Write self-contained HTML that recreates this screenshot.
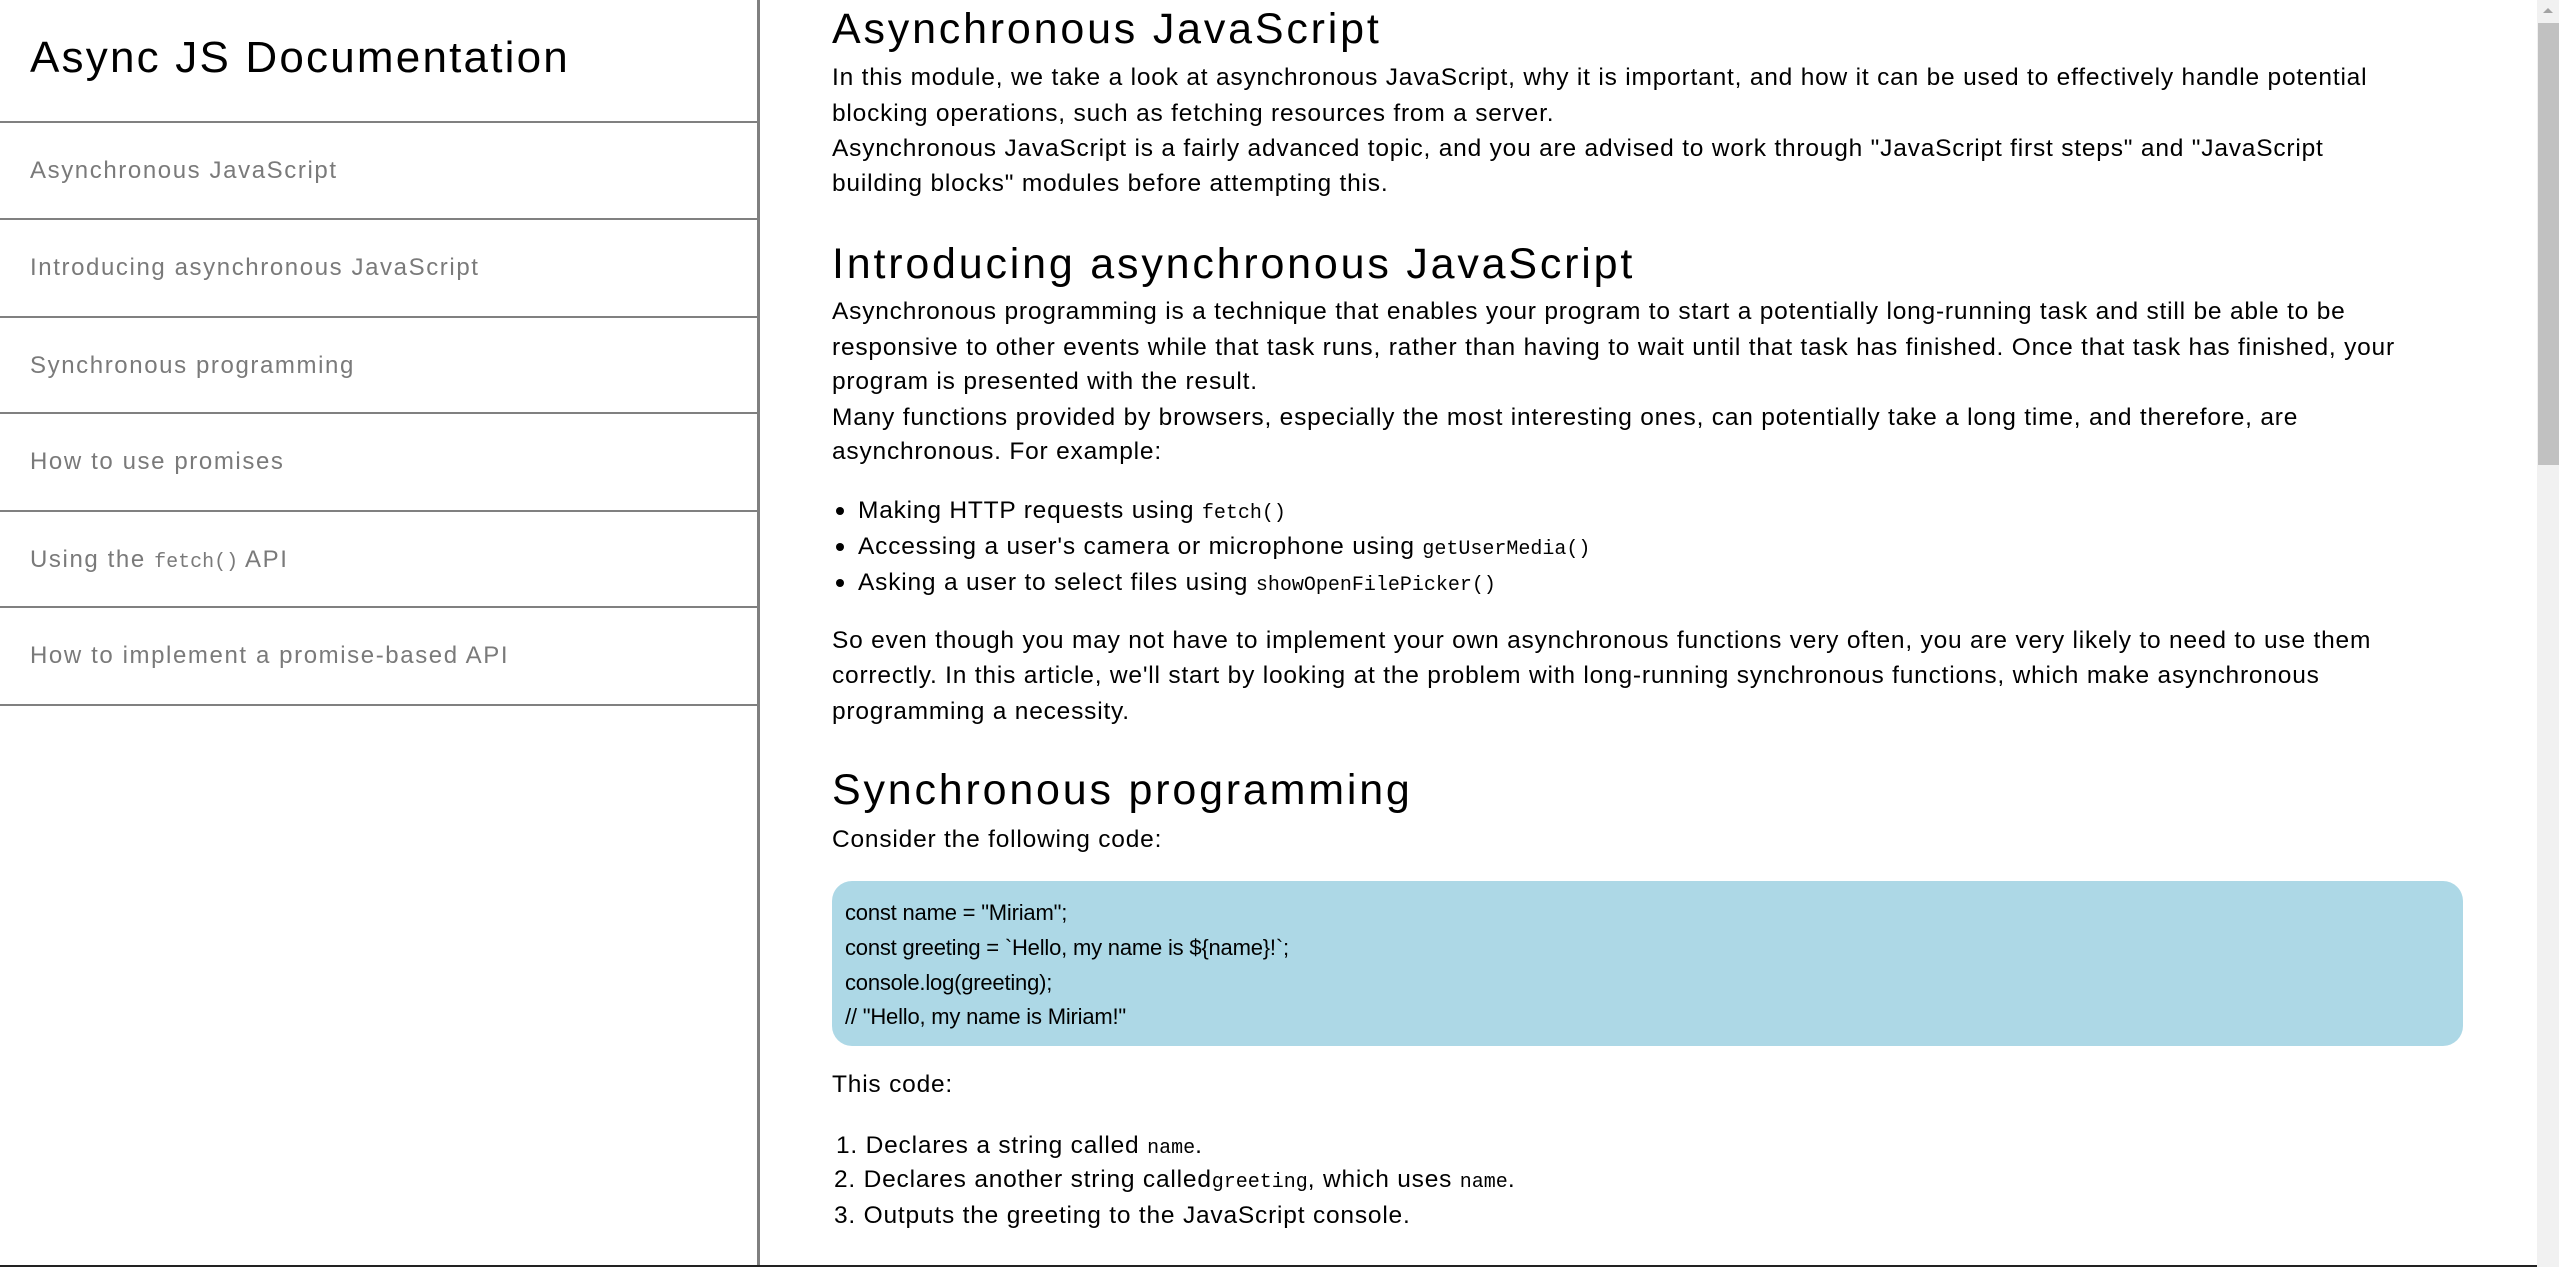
<!DOCTYPE html>
<html><head><meta charset="utf-8"><style>
*{margin:0;padding:0;box-sizing:border-box}
html,body{width:2559px;height:1267px;overflow:hidden;background:#fff;font-family:"Liberation Sans",Arial,sans-serif;color:#000}
.a{position:absolute;white-space:nowrap}
.side{position:absolute;left:0;top:0;width:760px;height:1267px;border-right:3px solid #808080}
.hr{position:absolute;left:0;width:757px;height:2px;background:#808080}
.nav{position:absolute;left:30px;font-size:24px;line-height:36px;color:#7a7a7a;letter-spacing:1.6px}
.p{position:absolute;left:832px;font-size:24.5px;line-height:36px;letter-spacing:0.8px;white-space:nowrap}
.h{position:absolute;left:832px;font-size:43px;line-height:56px;letter-spacing:2.8px;white-space:nowrap}
code{font-family:"Liberation Mono",monospace;font-size:20px;letter-spacing:0}
.li{position:absolute;left:858px;font-size:24.5px;line-height:36px;letter-spacing:0.8px;white-space:nowrap}
.dot{position:absolute;left:836px;width:8px;height:8px;border-radius:50%;background:#000}
.c{position:absolute;left:845px;font-size:22px;line-height:36px;letter-spacing:-0.2px;white-space:nowrap}
</style></head><body>
<div class="side">
  <div class="a" style="left:30px;top:30px;font-size:44px;line-height:56px;letter-spacing:2.2px">Async JS Documentation</div>
  <div class="hr" style="top:121px"></div>
  <div class="nav" style="top:153px">Asynchronous JavaScript</div>
  <div class="hr" style="top:218px"></div>
  <div class="nav" style="top:250px">Introducing asynchronous JavaScript</div>
  <div class="hr" style="top:316px"></div>
  <div class="nav" style="top:348px">Synchronous programming</div>
  <div class="hr" style="top:412px"></div>
  <div class="nav" style="top:444px">How to use promises</div>
  <div class="hr" style="top:510px"></div>
  <div class="nav" style="top:542px">Using the <code>fetch()</code> API</div>
  <div class="hr" style="top:606px"></div>
  <div class="nav" style="top:638px">How to implement a promise-based API</div>
  <div class="hr" style="top:704px"></div>
</div>

<div class="h" style="top:1px">Asynchronous JavaScript</div>
<div class="p" style="top:60px">In this module, we take a look at asynchronous JavaScript, why it is important, and how it can be used to effectively handle potential</div>
<div class="p" style="top:96px">blocking operations, such as fetching resources from a server.</div>
<div class="p" style="top:131px">Asynchronous JavaScript is a fairly advanced topic, and you are advised to work through "JavaScript first steps" and "JavaScript</div>
<div class="p" style="top:166px">building blocks" modules before attempting this.</div>

<div class="h" style="top:236px">Introducing asynchronous JavaScript</div>
<div class="p" style="top:294px">Asynchronous programming is a technique that enables your program to start a potentially long-running task and still be able to be</div>
<div class="p" style="top:330px">responsive to other events while that task runs, rather than having to wait until that task has finished. Once that task has finished, your</div>
<div class="p" style="top:364px">program is presented with the result.</div>
<div class="p" style="top:400px">Many functions provided by browsers, especially the most interesting ones, can potentially take a long time, and therefore, are</div>
<div class="p" style="top:434px">asynchronous. For example:</div>

<div class="dot" style="top:507px"></div><div class="li" style="top:493px">Making HTTP requests using <code>fetch()</code></div>
<div class="dot" style="top:543px"></div><div class="li" style="top:529px">Accessing a user's camera or microphone using <code>getUserMedia()</code></div>
<div class="dot" style="top:579px"></div><div class="li" style="top:565px">Asking a user to select files using <code>showOpenFilePicker()</code></div>

<div class="p" style="top:623px">So even though you may not have to implement your own asynchronous functions very often, you are very likely to need to use them</div>
<div class="p" style="top:658px">correctly. In this article, we'll start by looking at the problem with long-running synchronous functions, which make asynchronous</div>
<div class="p" style="top:694px">programming a necessity.</div>

<div class="h" style="top:762px">Synchronous programming</div>
<div class="p" style="top:822px">Consider the following code:</div>

<div class="a" style="left:832px;top:881px;width:1631px;height:165px;background:#add8e6;border-radius:20px"></div>
<div class="c" style="top:895px">const name = "Miriam";</div>
<div class="c" style="top:930px">const greeting = `Hello, my name is ${name}!`;</div>
<div class="c" style="top:965px">console.log(greeting);</div>
<div class="c" style="top:999px">// "Hello, my name is Miriam!"</div>

<div class="p" style="top:1067px">This code:</div>
<div class="p" style="left:836px;top:1128px">1. Declares a string called <code>name</code>.</div>
<div class="p" style="left:834px;top:1162px">2. Declares another string called<code>greeting</code>, which uses <code>name</code>.</div>
<div class="p" style="left:834px;top:1198px">3. Outputs the greeting to the JavaScript console.</div>

<div class="a" style="left:0;top:1265px;width:2537px;height:2px;background:#222"></div>

<div class="a" style="left:2537px;top:0;width:22px;height:1267px;background:#f1f1f1"></div>
<div class="a" style="left:2538px;top:23px;width:21px;height:442px;background:#c1c1c1"></div>
<div class="a" style="left:2543px;top:8px;width:0;height:0;border-left:5px solid transparent;border-right:5px solid transparent;border-bottom:5px solid #a3a3a3"></div>
</body></html>
